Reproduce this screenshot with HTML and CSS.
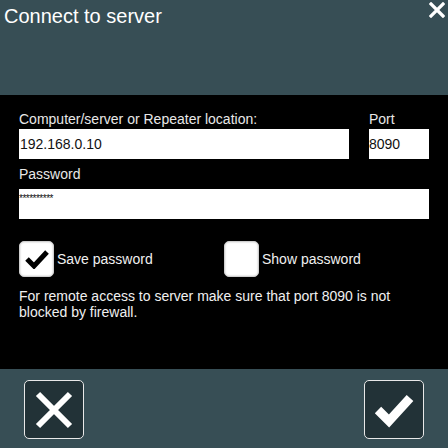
FILE: index.html
```html
<!DOCTYPE html>
<html>
<head>
<meta charset="utf-8">
<link rel="stylesheet" href="styles.css">
</head>
<body>
<div class="screen">
  <header class="header">
    <h1 class="title">Connect to server</h1>
    <svg class="close" width="16" height="16" viewBox="0 0 16 16"><path d="M2 2 L14 14 M14 2 L2 14" stroke="#fff" stroke-width="3.2" stroke-linecap="square"/></svg>
  </header>
  <main class="main">
    <div class="row">
      <div class="field">
        <div class="label">Computer/server or Repeater location:</div>
        <div class="input">192.168.0.10</div>
      </div>
      <div class="field">
        <div class="label">Port</div>
        <div class="input port">8090</div>
      </div>
    </div>
    <div class="label pwlabel">Password</div>
    <div class="input pw">**********</div>
    <div class="checks">
      <div class="check">
        <span class="box"><svg width="24" height="20" viewBox="0 0 24 20"><path d="M2 10 L9 17 L22 3" fill="none" stroke="#000" stroke-width="5"/></svg></span>
        <span class="ctext">Save password</span>
      </div>
      <div class="check">
        <span class="box"></span>
        <span class="ctext">Show password</span>
      </div>
    </div>
    <p class="note">For remote access to server make sure that port 8090 is not blocked by firewall.</p>
  </main>
  <footer class="footer">
    <button class="btn"><svg width="44" height="40" viewBox="0 0 44 40"><path d="M6 4 L38 36 M38 4 L6 36" stroke="#fff" stroke-width="6"/></svg></button>
    <button class="btn"><svg width="44" height="40" viewBox="0 0 44 40"><path d="M6 20 L17 31 L38 8" fill="none" stroke="#fff" stroke-width="9"/></svg></button>
  </footer>
</div>
</body>
</html>
```
FILE: styles.css
```css
html, body { margin: 0; padding: 0; background: #000; }
body { font-family: "Liberation Sans", Arial, sans-serif; }
.screen { width: 448px; height: 448px; display: flex; flex-direction: column; overflow: hidden; }
.header { height: 95px; background: #374e55; display: flex; justify-content: space-between; align-items: flex-start; padding: 0 3px 0 4px; box-sizing: border-box; }
.title { margin: 6px 0 0; font-size: 20px; font-weight: normal; color: #fff; line-height: 20px; }
.close { margin-top: 2px; }
.main { height: 274px; background: #000; padding: 14px 19px 0; box-sizing: border-box; }
.row { display: grid; grid-template-columns: 330px 60px; column-gap: 20px; }
.label { color: #e8e8e8; font-size: 14px; line-height: 20px; }
.input { background: #fff; height: 30px; line-height: 30px; font-size: 14px; color: #111; padding-left: 1px; box-sizing: border-box; }
.port { padding-left: 0; }
.pwlabel { line-height: 30px; }
.pw { font-size: 10px; line-height: 20px; padding-left: 0; letter-spacing: -0.5px; }
.checks { display: flex; margin-top: 22px; }
.check { display: flex; align-items: center; width: 205px; }
.box { width: 33px; height: 34px; background: #fff; border: 1px solid #cfcfcf; border-radius: 5px; display: flex; align-items: center; justify-content: center; box-shadow: inset 0 0 2px #bbb; }
.ctext { color: #f0f0f0; font-size: 14px; margin-left: 3px; }
.note { margin: 11px 0 0; color: #f0f0f0; font-size: 14px; line-height: 16px; }
.footer { flex: 1; background: #374e55; display: flex; justify-content: space-between; padding: 11px 24px 0 24px; box-sizing: border-box; }
.btn { width: 60px; height: 59px; background: #223237; border: 1.5px solid #e8e8e8; border-radius: 5px; padding: 0; display: flex; align-items: center; justify-content: center; }
```
